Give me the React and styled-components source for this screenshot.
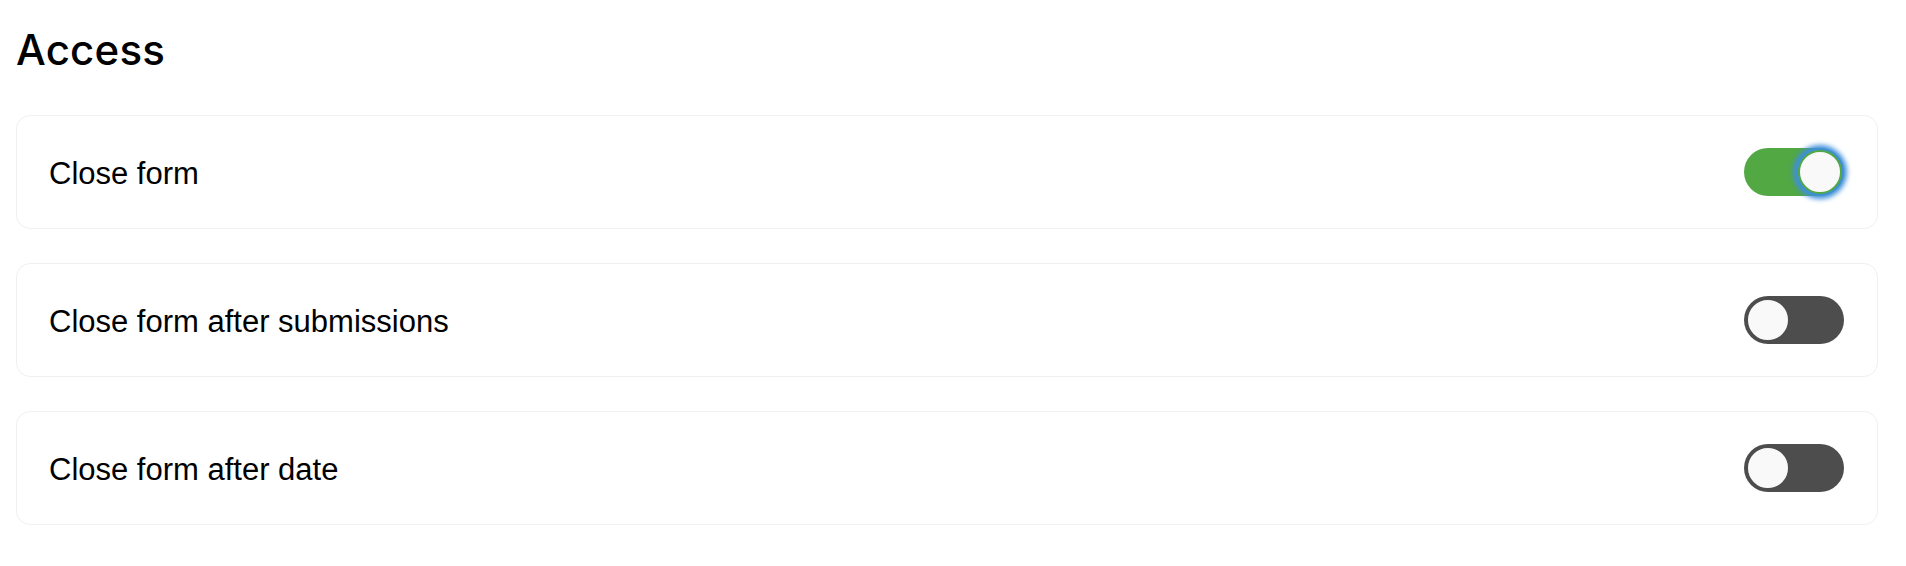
import React, { useState } from "react";
import styled, { createGlobalStyle } from "styled-components";

const GlobalStyle = createGlobalStyle`
  html, body {
    margin: 0;
    padding: 0;
    background: #ffffff;
  }
  body {
    font-family: "Liberation Sans", Arial, sans-serif;
    color: #000000;
  }
`;

const Page = styled.main`
  padding: 27px 28px 0 16px;
  box-sizing: border-box;
  width: 1906px;
`;

const Heading = styled.h2`
  margin: 0 0 42px 0;
  font-family: Inter, "Liberation Sans", sans-serif;
  font-size: 42px;
  line-height: 46px;
  font-weight: 500;
  letter-spacing: 0.2px;
`;

const List = styled.div`
  display: flex;
  flex-direction: column;
  gap: 34px;
`;

const Card = styled.div`
  display: flex;
  align-items: center;
  justify-content: space-between;
  height: 114px;
  box-sizing: border-box;
  padding: 0 33px 0 32px;
  border: 1px solid #f0f0f0;
  border-radius: 14px;
  background: #ffffff;
`;

const Label = styled.span`
  font-size: 31px;
  line-height: 38px;
  padding-top: 4px;
`;

const Track = styled.button`
  position: relative;
  width: 100px;
  height: 48px;
  padding: 0;
  border: none;
  border-radius: 24px;
  background: ${(p) => (p.$on ? "#52a843" : "#4d4d4d")};
  cursor: pointer;
  flex-shrink: 0;
  outline: none;
`;

const Knob = styled.span`
  position: absolute;
  top: 2px;
  left: ${(p) => (p.$on ? "54px" : "2px")};
  width: 44px;
  height: 44px;
  box-sizing: border-box;
  border-radius: 50%;
  background: #f9f9f9;
  border: 2px solid ${(p) => (p.$on ? "#52a843" : "#4d4d4d")};
  box-shadow: ${(p) => (p.$focus ? "0 0 5px 5px #3f8fdb" : "none")};
`;

function Toggle({ on, focus, onClick }) {
  return (
    <Track $on={on} onClick={onClick} role="switch" aria-checked={on}>
      <Knob $on={on} $focus={focus} />
    </Track>
  );
}

export default function App() {
  const [state, setState] = useState([true, false, false]);
  const items = ["Close form", "Close form after submissions", "Close form after date"];
  return (
    <>
      <GlobalStyle />
      <Page>
        <Heading>Access</Heading>
        <List>
          {items.map((label, i) => (
            <Card key={label}>
              <Label>{label}</Label>
              <Toggle
                on={state[i]}
                focus={i === 0}
                onClick={() =>
                  setState((s) => s.map((v, j) => (j === i ? !v : v)))
                }
              />
            </Card>
          ))}
        </List>
      </Page>
    </>
  );
}
